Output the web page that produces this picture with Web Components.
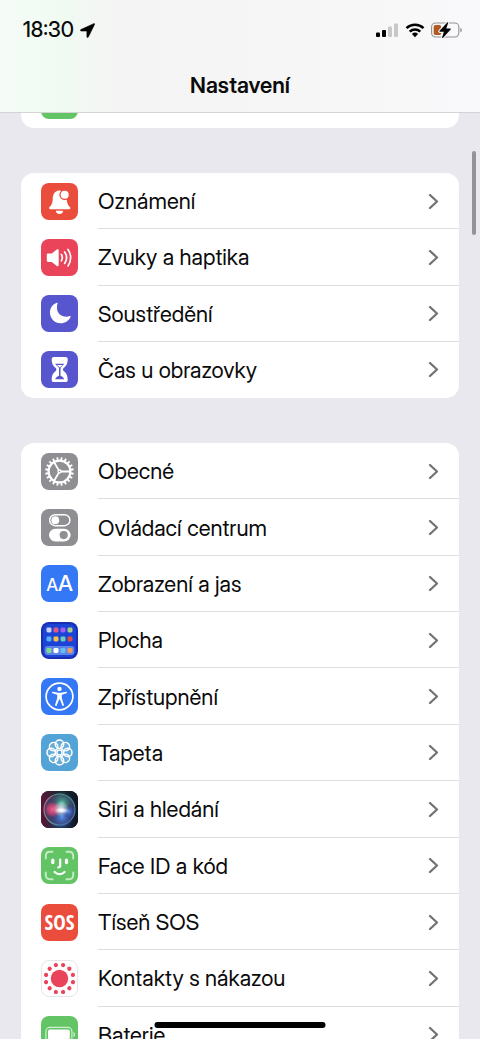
<!DOCTYPE html>
<html lang="cs">
<head>
<meta charset="utf-8">
<meta name="viewport" content="width=device-width, initial-scale=1">
<title>Nastavení</title>
<style>
    body {
        margin: 0;
        background: #e9e8ee;
        color: #0b0b0c;
        font-family: "Inter Display", Inter, "Noto Sans", sans-serif;
    }
</style>
</head>
<body>
<settings-screen>
    <status-bar slot="status" time="18:30"></status-bar>
    <settings-group class="under-header">
        <settings-row icon="plain"></settings-row>
    </settings-group>
    <settings-group style="--group-height: 225px">
        <settings-row icon="bell">Oznámení</settings-row>
        <settings-row icon="speaker">Zvuky a haptika</settings-row>
        <settings-row icon="moon">Soustředění</settings-row>
        <settings-row icon="hourglass">Čas u obrazovky</settings-row>
    </settings-group>
    <settings-group style="--group-height: 620px">
        <settings-row icon="gear">Obecné</settings-row>
        <settings-row icon="switches">Ovládací centrum</settings-row>
        <settings-row icon="letters">Zobrazení a jas</settings-row>
        <settings-row icon="home">Plocha</settings-row>
        <settings-row icon="person">Zpřístupnění</settings-row>
        <settings-row icon="flower">Tapeta</settings-row>
        <settings-row icon="siri">Siri a hledání</settings-row>
        <settings-row icon="face">Face ID a kód</settings-row>
        <settings-row icon="sos">Tíseň SOS</settings-row>
        <settings-row icon="exposure">Kontakty s nákazou</settings-row>
        <settings-row icon="battery">Baterie</settings-row>
    </settings-group>
</settings-screen>

<script>
// repeat a shape around the middle of the 37x37 tile
const around = (count, shape, start = 0) =>
    Array.from({ length: count }, (_, i) => `<g transform="rotate(${start + i * 360 / count} 18.5 18.5)">${shape}</g>`).join('');

const homeDots = [
    ['#c9d3f2', '#dc5c86', '#a35df0', '#a9cf86'],
    ['#55b0f5', '#f5bf4d', '#6fcbb5', '#e04b40'],
    ['#7fdc8c', '#ffffff', '#62c0f7', '#f09a5c']
].map((row, r) => row.map((color, c) =>
    `<rect x="${5.5 + c * 7}" y="${[5.5, 14.5, 26][r]}" width="5" height="5" rx="1.4" fill="${color}"/>`).join('')).join('');

const ICONS = {
    plain: { bg: '#63c466', art: '' },
    bell: {
        bg: '#eb4d3d',
        art: `<path d="M18 7.500c-4.600.6-6.200 4.200-6.300 8.400-.1 4.600-1.400 6.200-3.200 8.200-.8 1-.3 2.200.9 2.200h18.700c1.200 0 1.700-1.200.9-2.200-1.800-2-3.100-3.600-3.200-8.200-.1-4.700-2-8-7.800-8.400z" fill="#fff"/>
            <path d="M14.900 27.800h7.200a3.600 3.100 0 0 1-7.200 0z" fill="#fff"/>
            <circle cx="23.700" cy="11.700" r="4.700" fill="#fff" stroke="#eb4d3d" stroke-width="1.300"/>`
    },
    speaker: {
        bg: '#ea445a',
        art: `<path d="M7.200 14.500h3.600l5-4c.9-.7 1.900-.3 1.900.8v14.800c0 1.100-1 1.500-1.900.8l-5-4H7.200c-.9 0-1.400-.5-1.400-1.400v-5.600c0-.9.5-1.400 1.400-1.400z" fill="#fff"/>
            <path d="M20.300 15.400a6 6 0 0 1 0 6.500M23.600 12.900a10 10 0 0 1 0 11.500M27 10.500a14 14 0 0 1 0 16.400" fill="none" stroke="#fff" stroke-width="1.700" stroke-linecap="round"/>`
    },
    moon: {
        bg: '#5756ce',
        art: '<path d="M15.800 7.800c-4.200 1.500-6.800 5.200-6.800 9.700 0 6 4.700 10.800 10.600 10.800 4.600 0 8.400-2.600 10-6.500.2-.6-.2-1-.8-.7-1 .4-2.100.6-3.300.6-5.600 0-9.600-3.900-9.600-9.300 0-1.400.3-2.700.7-3.800.2-.6-.2-1-.8-.8z" fill="#fff"/>'
    },
    hourglass: {
        bg: '#5756ce',
        art: `<path d="M13 6h11.400c1.400 0 2.300.8 2.300 2.100 0 4.700-1.300 6.700-4.100 9-.8.7-.8 2.100 0 2.800 2.800 2.300 4.100 4.300 4.100 9 0 1.300-.9 2.100-2.300 2.100H13c-1.400 0-2.300-.8-2.300-2.100 0-4.700 1.300-6.700 4.100-9 .8-.7.8-2.100 0-2.800-2.800-2.300-4.100-4.300-4.100-9C10.700 6.800 11.600 6 13 6z" fill="#fff"/>
            <path d="M14.300 12.800h8.800c-.8 1.400-1.800 2.200-3 3.200-.6.500-.8 1.200-.8 2.200v6.600c1.700.7 3.300 1.700 3.900 3.400h-9c.6-1.700 2.200-2.700 3.900-3.400v-6.600c0-1-.2-1.700-.8-2.200-1.200-1-2.200-1.800-3-3.200z" fill="#5756ce"/>
            <path d="M15.800 13.900h5.900c-1 1-2 1.700-2.900 2.500-.9-.8-2-1.500-3-2.500z" fill="#fff"/>
            <path d="M18.700 17v8" stroke="#5756ce" stroke-width="1.200"/>`
    },
    gear: {
        bg: '#8e8e93',
        art: `<g fill="none" stroke="#fff">${around(20, '<path d="M18.500 7V4.200" stroke-width="1.900"/>', 9)}
            <circle cx="18.500" cy="18.500" r="10.900" stroke-width="2.200"/>
            ${around(3, '<path d="M19.500 18.500h10" stroke-width="1.800"/>')}
            <circle cx="18.500" cy="18.500" r="1.500" stroke-width="1.300"/></g>`
    },
    switches: {
        bg: '#8e8e93',
        art: `<rect x="8.700" y="5.700" width="20.200" height="11" rx="5.500" fill="none" stroke="#fff" stroke-width="1.400"/>
            <circle cx="14.300" cy="11.200" r="3.900" fill="#fff"/>
            <rect x="8" y="19.800" width="21.600" height="12.600" rx="6.300" fill="#fff"/>
            <circle cx="22.700" cy="26.100" r="4.100" fill="#8e8e93"/>`
    },
    letters: {
        bg: '#3478f6',
        art: `<text x="5.500" y="25.700" font-size="17" font-weight="500" fill="#fff">A</text>
            <text x="17" y="25.700" font-size="22" font-weight="500" fill="#fff">A</text>`
    },
    home: {
        bg: '#1930b4',
        art: `<rect x="2" y="2" width="33" height="33" rx="6.500" fill="#1b44d6"/>
            <rect x="3.700" y="24" width="29.600" height="9" rx="3" fill="#5f84e8"/>${homeDots}`
    },
    person: {
        bg: '#3478f6',
        art: `<circle cx="18.500" cy="18.500" r="13.400" fill="none" stroke="#fff" stroke-width="1.700"/>
            <circle cx="18.500" cy="10.900" r="2.200" fill="#fff"/>
            <path d="M11.900 13.700c-.9-.2-1.300 1.100-.3 1.500l4.600 1.500v3.600l-2.100 6.500c-.3 1.100 1.100 1.600 1.600.6l2.400-5.800h.8l2.400 5.800c.5 1 1.900.5 1.600-.6l-2.100-6.500v-3.600l4.600-1.500c1-.4.600-1.700-.3-1.500l-5.300 1h-2.600z" fill="#fff"/>`
    },
    flower: {
        bg: '#54a3d6',
        art: `<g fill="none" stroke="#fff" stroke-width="1.500">${around(8, '<circle cx="18.500" cy="10.200" r="4.200" fill="#fff" fill-opacity=".1"/>')}
            <circle cx="18.500" cy="18.500" r="2.600" fill="#54a3d6"/></g>`
    },
    siri: {
        bg: '#171329',
        art: `<defs>
                <linearGradient id="back"><stop stop-color="#5a1637"/><stop offset=".5" stop-color="#182a32"/><stop offset="1" stop-color="#101424"/></linearGradient>
                <linearGradient id="rim" x2="1" y2=".3"><stop stop-color="#c6587f"/><stop offset=".5" stop-color="#59a198"/><stop offset="1" stop-color="#4779ad"/></linearGradient>
                <radialGradient id="red"><stop stop-color="#f0608c"/><stop offset=".6" stop-color="#dc4478" stop-opacity=".7"/><stop offset="1" stop-color="#d43a70" stop-opacity="0"/></radialGradient>
                <radialGradient id="teal"><stop stop-color="#5bd8b3"/><stop offset="1" stop-color="#1f6c66" stop-opacity="0"/></radialGradient>
                <radialGradient id="blue"><stop stop-color="#5695ef"/><stop offset="1" stop-color="#263c9b" stop-opacity="0"/></radialGradient>
                <radialGradient id="glow"><stop stop-color="#fff"/><stop offset=".25" stop-color="#fff" stop-opacity=".85"/><stop offset="1" stop-color="#fff" stop-opacity="0"/></radialGradient>
            </defs>
            <rect width="37" height="37" rx="8" fill="url(#back)"/>
            <ellipse cx="19" cy="33" rx="14" ry="9" fill="url(#blue)" opacity=".45"/>
            <circle cx="18.500" cy="18.500" r="15.500" fill="#4a4670" fill-opacity=".75" stroke="url(#rim)" stroke-width="1.200"/>
            <circle cx="21" cy="12" r="12" fill="url(#teal)" opacity=".85"/>
            <circle cx="21" cy="26" r="12" fill="url(#blue)"/>
            <circle cx="11.500" cy="18.500" r="8" fill="url(#red)"/>
            <circle cx="27.500" cy="20.500" r="7" fill="url(#blue)"/>
            <ellipse cx="20" cy="18" rx="8" ry="8" fill="url(#glow)" opacity=".8"/>
            <ellipse cx="20.500" cy="19.500" rx="7" ry="3" fill="url(#glow)"/>`
    },
    face: {
        bg: '#63c466',
        art: `<path d="M4.800 11.500V9c0-2.800 1.400-4.200 4.200-4.200h2.500M25.500 4.800H28c2.800 0 4.200 1.400 4.200 4.200v2.500M32.200 25.500V28c0 2.800-1.400 4.200-4.200 4.200h-2.500M11.500 32.200H9c-2.800 0-4.200-1.400-4.200-4.200v-2.500" fill="none" stroke="#c5ebc5" stroke-width="1.900" stroke-linecap="round"/>
            <path d="M11.800 13v2.600M25.500 13v2.600" stroke="#fff" stroke-width="3.200" stroke-linecap="round"/>
            <path d="M19.200 12.600v5.700c0 1.500-.6 2.200-2 2.200M13.600 25c2.900 2.900 7.100 2.900 10 0" fill="none" stroke="#fff" stroke-width="2.200" stroke-linecap="round"/>`
    },
    sos: {
        bg: '#eb4d3d',
        art: '<text class="sos" x="18.500" y="26" text-anchor="middle" font-size="21" font-weight="700" fill="#fff">SOS</text>'
    },
    exposure: {
        bg: '#ffffff',
        art: `<rect x=".5" y=".5" width="36" height="36" rx="7.500" fill="none" stroke="#e6e6e9"/>
            <g fill="#ea445a"><circle cx="18.500" cy="18.500" r="8.700"/>
            ${around(12, '<circle cx="18.500" cy="4.600" r="2.100"/>', 15)}</g>`
    },
    battery: {
        bg: '#63c466',
        art: `<rect x="4.900" y="11.400" width="26" height="14.200" rx="4" fill="none" stroke="#d3efd3" stroke-width="1.200"/>
            <rect x="7" y="13.500" width="21.800" height="10" rx="2" fill="#fff"/>
            <path d="M32.500 16c2 .6 2 4.400 0 5z" fill="#d3efd3"/>`
    }
};

class SettingsIcon extends HTMLElement {
    connectedCallback() {
        const icon = ICONS[this.getAttribute('name')];
        this.attachShadow({ mode: 'open' }).innerHTML = `
            <style>
                :host { display: block; flex: none; width: 37px; height: 37px; }
                svg { display: block; width: 100%; height: 100%; }
                .sos { font-family: "Liberation Sans Narrow", "Open Sans Condensed", "Liberation Sans", sans-serif; }
            </style>
            <svg viewBox="0 0 37 37" aria-hidden="true">
                <rect width="37" height="37" rx="8" fill="${icon.bg}"/>${icon.art}
            </svg>
        `;
    }
}
customElements.define('settings-icon', SettingsIcon);

class SettingsRow extends HTMLElement {
    connectedCallback() {
        this.attachShadow({ mode: 'open' }).innerHTML = `
            <style>
                :host { display: block; min-height: 56px; }
                a {
                    display: flex; align-items: stretch; gap: 20px; height: 100%;
                    padding-left: 20px; color: inherit; text-decoration: none;
                }
                settings-icon { align-self: center; }
                .content {
                    flex: 1; display: flex; align-items: center; justify-content: space-between;
                    padding-right: 20px; box-shadow: inset 0 -1px #dddde0;
                }
                :host(:last-child) .content { box-shadow: none; }
                .label { font-size: 22px; line-height: 28px; }
                .chevron { width: 11px; height: 17px; }
            </style>
            <a href="#">
                <settings-icon name="${this.getAttribute('icon')}"></settings-icon>
                <span class="content">
                    <span class="label"><slot></slot></span>
                    <svg class="chevron" viewBox="0 0 11 17" aria-hidden="true">
                        <path d="M2 2l7 6.500L2 15" fill="none" stroke="#737377" stroke-width="2.300" stroke-linecap="round" stroke-linejoin="round"/>
                    </svg>
                </span>
            </a>
        `;
    }
}
customElements.define('settings-row', SettingsRow);

class SettingsGroup extends HTMLElement {
    connectedCallback() {
        this.attachShadow({ mode: 'open' }).innerHTML = `
            <style>
                :host {
                    display: grid; grid-auto-rows: 1fr; flex: none;
                    min-height: var(--group-height, 56px);
                    background: #fff; border-radius: 13px; overflow: hidden;
                }
            </style>
            <slot></slot>
        `;
    }
}
customElements.define('settings-group', SettingsGroup);

class StatusBar extends HTMLElement {
    connectedCallback() {
        this.attachShadow({ mode: 'open' }).innerHTML = `
            <style>
                :host {
                    display: flex; align-items: center; justify-content: space-between;
                    height: 60px; padding: 0 18px 0 23px;
                }
                div { display: flex; align-items: center; gap: 6px; }
                time { font-size: 21px; line-height: 24px; font-weight: 500; }
            </style>
            <div>
                <time>${this.getAttribute('time')}</time>
                <svg width="15" height="15" viewBox="0 0 15 15" aria-hidden="true">
                    <path d="M13.700.7.900 6.600c-.8.400-.6 1.400.3 1.400h5.700v5.800c0 .9 1 1.100 1.400.300L14.500 1.500c.3-.6-.2-1.100-.8-.8z" stroke="#000" stroke-width=".6"/>
                </svg>
            </div>
            <div>
                <svg width="23" height="15" viewBox="0 0 23 15" aria-hidden="true">
                    <rect x="0" y="9.500" width="4" height="4.500" rx="1"/>
                    <rect x="6" y="7" width="4" height="7" rx="1"/>
                    <rect x="12" y="3.500" width="4" height="10.500" rx="1" fill="#c8c8c8"/>
                    <rect x="18" y="0.500" width="4" height="13.500" rx="1" fill="#c8c8c8"/>
                </svg>
                <svg width="20" height="15" viewBox="0 0 20 15" aria-hidden="true">
                    <path d="M1.500 5.200a12.300 12.300 0 0 1 17 0M4.700 8.600a7.700 7.700 0 0 1 10.600 0" fill="none" stroke="#000" stroke-width="2.500"/>
                    <path d="M10 14.200 6.900 11a4.500 4.500 0 0 1 6.200 0z"/>
                </svg>
                <svg width="31" height="16" viewBox="0 0 31 16" aria-hidden="true">
                    <rect x=".6" y="1" width="27.200" height="14" rx="4" fill="none" stroke="#929292" stroke-width="1.100"/>
                    <path d="M29.300 5.700c2 .5 2 4.100 0 4.600z" fill="#929292"/>
                    <rect x="2.700" y="3" width="7.500" height="10" rx="1.800" fill="#b35a20"/>
                    <path d="M16.300.500 8.600 8.800c-.5.500-.2 1 .4 1h3.900l-1.800 5.700c-.2.700.3.900.8.400l7.700-8.300c.5-.5.200-1-.4-1h-3.900L17.100.900c.2-.7-.3-.9-.8-.4z" stroke="#f6f6f6" stroke-width="2.200" paint-order="stroke"/>
                </svg>
            </div>
        `;
    }
}
customElements.define('status-bar', StatusBar);

class SettingsScreen extends HTMLElement {
    connectedCallback() {
        this.attachShadow({ mode: 'open' }).innerHTML = `
            <style>
                :host { display: flex; flex-direction: column; position: relative; height: 100vh; overflow: hidden; }
                header {
                    position: relative; z-index: 1; flex: none;
                    border-bottom: 1px solid #d3d3d6;
                    background: linear-gradient(90deg, #f6fbf8 0, #f3fbf5 6%, #effaf1 14%, #f3f7f3 19%, #f4f4f4 25%, #f6f6f6 60%, #f9f9fb 100%);
                }
                h1 { margin: 0; padding: 11px 0 13px; text-align: center; font-size: 22px; line-height: 28px; font-weight: 600; }
                main { display: flex; flex-direction: column; gap: 45px; padding: 0 21px; }
                /* the first group is scrolled most of the way under the header */
                ::slotted(.under-header) { margin-top: -41px; }
                .thumb {
                    position: absolute; top: 151px; right: 4px; width: 4px; height: 84px;
                    border-radius: 2px; background: #949399;
                }
                .indicator {
                    position: absolute; bottom: 11px; left: 50%; width: 171px; height: 6px;
                    transform: translateX(-50%); border-radius: 3px; background: #000;
                }
            </style>
            <header>
                <slot name="status"></slot>
                <h1>Nastavení</h1>
            </header>
            <main><slot></slot></main>
            <div class="thumb"></div>
            <div class="indicator"></div>
        `;
    }
}
customElements.define('settings-screen', SettingsScreen);
</script>
</body>
</html>
